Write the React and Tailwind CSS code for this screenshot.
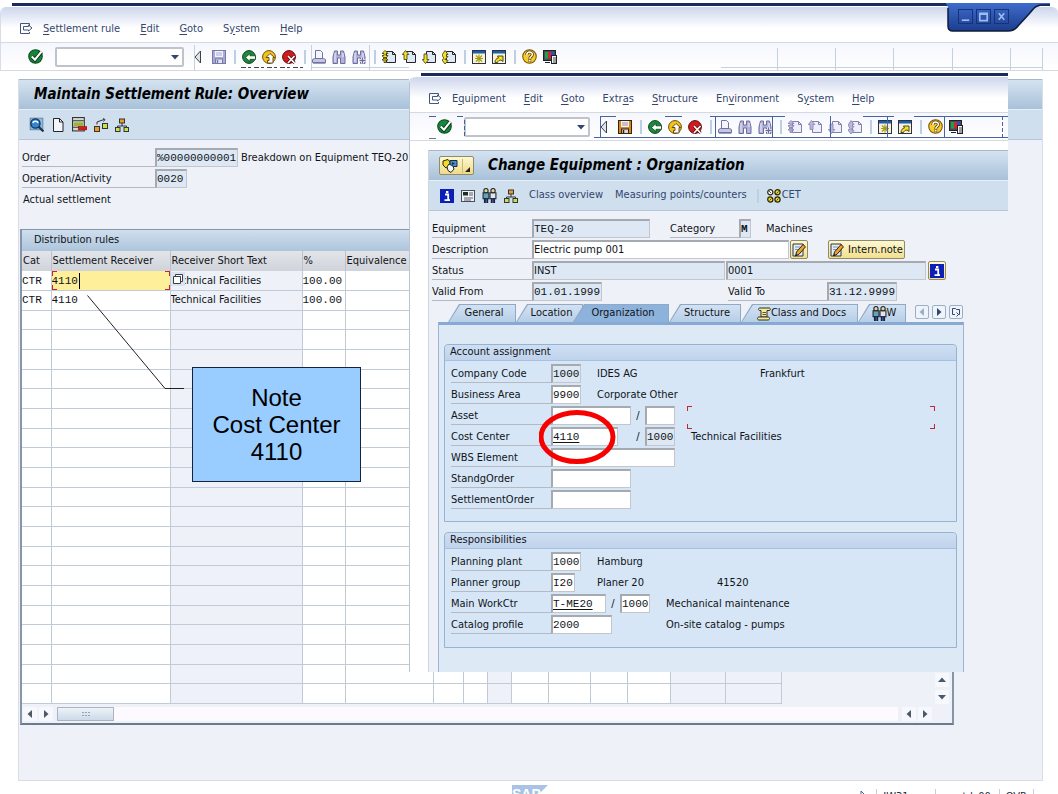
import { clsx } from "clsx";

/* ---------- icons ---------- */

const Icon = ({ size = 14, children }) => (
  <svg width={size} height={size} viewBox="0 0 14 14" aria-hidden="true" focusable="false" className="block shrink-0">
    {children}
  </svg>
);

const MenuIcon = () => (
  <Icon>
    <path d="M10.500 4V1.500H1.500v10h9V10M4.500 4.500h5v-1.500l3.500 3-3.500 3V8h-5z" fill="none" stroke="#44557a" />
  </Icon>
);

const CheckIcon = () => (
  <Icon size={15}>
    <circle cx="7" cy="7" r="6.300" fill="#14883a" stroke="#0b4a1c" />
    <path d="M3.500 7l3 3 6-7.500" fill="none" stroke="#0b3016" strokeWidth="3.600" />
    <path d="M3.500 7l3 3 6-7.500" fill="none" stroke="#fff" strokeWidth="2" />
  </Icon>
);

const TriangleIcon = () => (
  <svg width="8" height="14" viewBox="0 0 8 14" aria-hidden="true" className="block">
    <path d="M6.500 1v12L1 7z" fill="#dfe2e8" stroke="#3c4048" />
  </svg>
);

const SaveIcon = ({ muted }) => (
  <Icon>
    <rect x=".5" y=".5" width="13" height="13" fill={muted ? "#a9a9d8" : "#d58a1c"} stroke={muted ? "#7a7aa8" : "#3a2408"} />
    <rect x="3" y="1" width="8" height="6" fill="#f4f4fc" />
    <path d="M4 3h6M4 5h6" stroke={muted ? "#a9a9d8" : "#a08aa8"} />
    <rect x="3.500" y="9" width="7" height="4.500" fill={muted ? "#e4e4f4" : "#d8d8e6"} stroke={muted ? "#7a7aa8" : "#3a2408"} />
    <path d="M5.500 10v3" stroke={muted ? "#7a7aa8" : "#3a2408"} strokeWidth="1.500" />
  </Icon>
);

const BackIcon = () => (
  <Icon>
    <circle cx="7" cy="7" r="6.400" fill="#1c8a3c" stroke="#0d3f1b" />
    <path d="M3.500 7.500l4.500-4v2.300H13.500v3.500H8v2.300z" fill="#fff" stroke="#0d3f1b" strokeWidth=".8" />
  </Icon>
);

const ExitIcon = () => (
  <Icon>
    <circle cx="7" cy="7" r="6.400" fill="#f2c31a" stroke="#6e4c08" />
    <path d="M8 3.500l4.500 4H11V13H5.500V10.500H7v-3H4z" fill="#fff" stroke="#5a3c05" strokeWidth=".9" />
  </Icon>
);

const CancelIcon = () => (
  <Icon>
    <circle cx="7" cy="7" r="6.400" fill="#cf1a20" stroke="#5e0a0c" />
    <path d="M6 6l6.500 7M12.500 6L6 13" stroke="#5e0a0c" strokeWidth="3.200" />
    <path d="M6 6l6.500 7M12.500 6L6 13" stroke="#fff" strokeWidth="1.700" />
  </Icon>
);

const PrintIcon = () => (
  <Icon>
    <path d="M3.500 8.500V.5h5l2 2v6" fill="#f4f4fd" stroke="#7272a2" />
    <path d="M.5 12.500V9.500l2-1h9l2 1v3z" fill="#c4c4e4" stroke="#7272a2" />
    <path d="M1 13.200h12.500" stroke="#7272a2" />
  </Icon>
);

const FindIcon = ({ plus }) => (
  <Icon>
    <path d="M1 13.500V7l1.500-6h3v4h3V1h3L13 7v6.500H8.500V8h-3v5.500z" fill="#b3b3da" stroke="#6c6ca0" />
    <path d="M3 3v9M11 3v4" stroke="#ededfb" />
    {plus && <path d="M10.500 7.500v6M7.500 10.500h6" stroke="#fff" strokeWidth="3" />}
    {plus && <path d="M10.500 7.500v6M7.500 10.500h6" stroke="#6c6ca0" strokeWidth="1.300" />}
  </Icon>
);

const PAGE_ARROWS = {
  first: "M3 .5l3 3H4v2h2l-3 4-3-4h2v-2H0zM3 7l3 3H4v2.500H2V10H0z",
  prev: "M3.500 .5l3.300 4H5v5H2v-5H.3z",
  next: "M3.500 13.500l3.300-4H5V4H2v5.500H.3z",
  last: "M3 .5l3 4H4.500v2H6l-3 3 3 1-3 3.500L0 10l2-1.500L0 5z",
};

const PageIcon = ({ kind, muted }) => (
  <Icon>
    <path d="M4.500 1.500h6l3 3v8h-9z" fill={muted ? "#eeeefb" : "#dfe9f6"} stroke={muted ? "#8080ad" : "#23252b"} />
    <path d="M10.500 1.500v3h3" fill="none" stroke={muted ? "#8080ad" : "#23252b"} />
    <path d={PAGE_ARROWS[kind]} fill={muted ? "#b9b9dd" : "#f1e22a"} stroke={muted ? "#8080ad" : "#3a3405"} strokeWidth=".8" />
  </Icon>
);

const SessionIcon = ({ shortcut }) => (
  <Icon>
    <rect x=".5" y=".5" width="13" height="13" fill="#f6f3d8" stroke="#2e3140" />
    <rect x="1" y="1" width="12" height="2.500" fill="#1b5fae" />
    {shortcut ? (
      <path d="M3 12.500c0-3 1.500-4 3.500-4.500L5.500 6H11v5.500L9 10c-2 .3-3 1-3.500 2.500z" fill="#f5e02a" stroke="#2c2605" strokeWidth=".8" />
    ) : (
      <path d="M7 4.500v8M3 8.500h8M4 5.500l6 6M10 5.500l-6 6" stroke="#a59a10" strokeWidth="1.100" />
    )}
  </Icon>
);

const HelpIcon = () => (
  <Icon size={15}>
    <circle cx="7" cy="7" r="6.300" fill="#f4cf2a" stroke="#7c5306" />
    <path d="M4.500 5.500c0-3.500 5.200-3.500 5.200-.4C9.700 7 7.300 7 7.300 9" fill="none" stroke="#5c3c04" strokeWidth="2.800" />
    <path d="M4.500 5.500c0-3.500 5.200-3.500 5.200-.4C9.700 7 7.300 7 7.300 9" fill="none" stroke="#fff" strokeWidth="1.400" />
    <rect x="6.300" y="10" width="2" height="2" fill="#fff" stroke="#5c3c04" strokeWidth=".5" />
  </Icon>
);

const LayoutIcon = () => (
  <Icon>
    <rect x=".5" y=".5" width="12" height="10" fill="#4a4d55" stroke="#1f2126" />
    <rect x="2" y="2" width="3" height="6.500" fill="#1fa04a" />
    <rect x="5" y="2" width="3" height="6.500" fill="#d3272c" />
    <rect x="8" y="2" width="3" height="6.500" fill="#2a50c4" />
    <rect x="8.500" y="5.500" width="5" height="8" fill="#f2f2f2" stroke="#1f2126" />
    <path d="M10 8h3M10 10h3M10 12h3" stroke="#1f2126" strokeWidth=".8" />
    <path d="M2 12.500h5" stroke="#1f2126" />
  </Icon>
);

const MagnifierIcon = () => (
  <Icon size={15}>
    <rect x="1" y="1" width="12" height="11" fill="#8fb6e0" stroke="#54708e" strokeWidth=".6" />
    <circle cx="6" cy="6" r="4.300" fill="#2f86d6" stroke="#16334f" strokeWidth="1.200" />
    <path d="M3.500 5.500c1-2 4-2 5 0" fill="none" stroke="#fff" strokeWidth="1.400" />
    <path d="M9 9l4.500 4.500" stroke="#16334f" strokeWidth="2" />
  </Icon>
);

const NewPageIcon = () => (
  <Icon>
    <path d="M2.500 .5h6l3.500 3.500v9.500H2.500z" fill="#f2f6fb" stroke="#23252b" />
    <path d="M8.500 .5V4H12" fill="none" stroke="#23252b" />
  </Icon>
);

const DeleteRowIcon = () => (
  <Icon size={15}>
    <rect x=".5" y=".5" width="11" height="12.500" fill="#d4d9c9" stroke="#33353b" />
    <path d="M1 3.500h10M1 9.500h10" stroke="#33353b" />
    <rect x="1.500" y="5" width="9" height="3.500" fill="#9db33c" />
    <rect x="6" y="9" width="8" height="3" fill="#e01818" stroke="#7c0b0b" strokeWidth=".5" />
  </Icon>
);

const MoveIcon = () => (
  <Icon>
    <path d="M3 6.500V4l7-2.500M9 .5l2 1-1.500 2" fill="none" stroke="#33353b" />
    <rect x=".5" y="8.500" width="5" height="5" fill="#ef9c1d" stroke="#33353b" />
    <rect x="8.500" y="5.500" width="5" height="5" fill="#c9e04b" stroke="#33353b" />
  </Icon>
);

const HierarchyIcon = () => (
  <Icon>
    <path d="M7 5v3M2.500 10V8h9v2" fill="none" stroke="#33353b" />
    <rect x="4.500" y="1" width="5" height="4" fill="#ef9c1d" stroke="#33353b" />
    <rect x=".5" y="9.500" width="4.500" height="4" fill="#c9e04b" stroke="#33353b" />
    <rect x="9" y="9.500" width="4.500" height="4" fill="#c9e04b" stroke="#33353b" />
  </Icon>
);

const InfoIcon = () => (
  <Icon>
    <rect width="14" height="14" fill="#0d1fb4" />
    <path d="M5 5.500h3.200V11M4.500 11.200h5.500" fill="none" stroke="#fff" strokeWidth="1.800" />
    <rect x="6" y="2" width="2.400" height="2.200" fill="#fff" />
  </Icon>
);

const DetailIcon = () => (
  <Icon>
    <rect x=".5" y="1.500" width="13" height="11" fill="#eef3f9" stroke="#4a4d55" />
    <path d="M8 4h4M8 6h4M3 9h9M3 11h7" stroke="#4a4d55" strokeWidth=".9" />
    <rect x="2" y="3" width="5" height="3.500" fill="#1f2b22" />
  </Icon>
);

const PartnersIcon = () => (
  <Icon size={15}>
    <path d="M1 4.500h5.500V10H1z" fill="#5fa6b8" stroke="#22242a" />
    <path d="M7.500 4.500H13V10H7.500z" fill="#dfe6ee" stroke="#22242a" />
    <circle cx="3.700" cy="2.500" r="2" fill="#e9d59a" stroke="#22242a" />
    <circle cx="10.300" cy="2.500" r="2" fill="#e9d59a" stroke="#22242a" />
    <path d="M2.700 9.500v4.500M4.900 9.500v4.500M9.100 9.500v4.500M11.300 9.500v4.500" stroke="#16204e" strokeWidth="1.800" />
  </Icon>
);

const CetIcon = () => (
  <Icon>
    <circle cx="3.300" cy="3.300" r="2.600" fill="#fff" stroke="#2c2605" strokeWidth="1.200" />
    <circle cx="10.500" cy="3.300" r="2.600" fill="#e8d82a" stroke="#2c2605" strokeWidth="1.200" />
    <circle cx="3.300" cy="10.500" r="2.600" fill="#e8d82a" stroke="#2c2605" strokeWidth="1.200" />
    <circle cx="10.500" cy="10.500" r="2.600" fill="#e8d82a" stroke="#2c2605" strokeWidth="1.200" />
    <path d="M2 2l2 2M9.500 4.500l2-2M2.500 11.500l2-2M9.500 11.500l2-2" stroke="#2c2605" strokeWidth=".8" />
  </Icon>
);

const PencilIcon = () => (
  <Icon>
    <path d="M1 1h10v12H1z" fill="#e3edf7" stroke="#33353b" />
    <path d="M3 4h5M3 6.500h4" stroke="#7f93ad" />
    <path d="M3.500 13l1-4L11 1.500l2.500 2.300L7 11.300z" fill="#efa32a" stroke="#2a2015" />
    <path d="M3.500 13l2-.8-1-1.500z" fill="#2a2015" />
  </Icon>
);

const ScrollDocIcon = () => (
  <Icon>
    <path d="M3 1h9.500c1 0 1 2.500 0 2.500H10V10H4V3.500H3C1 3.500 1 1 3 1z" fill="#f4eaa0" stroke="#33301a" />
    <path d="M2 10h9c2 0 2 3 0 3H2c-2 0-2-3 0-3z" fill="#f4eaa0" stroke="#33301a" />
    <path d="M5.500 5.500H9M5.500 7.500H9" stroke="#33301a" strokeWidth=".8" />
  </Icon>
);

const ServicesIcon = () => (
  <svg width="16" height="14" viewBox="0 0 16 14" aria-hidden="true" className="block">
    <path d="M1 2l5-1.500L8 3v4L4 9 1 6z" fill="#f1dc28" stroke="#2c2605" />
    <path d="M8 1.500h7v6H8z" fill="#4a8fc9" stroke="#152c44" />
    <path d="M10 3l3 1.500L10 6z" fill="#102a70" />
    <path d="M5 8l2-3 4 2 1 3-3 3.500-3-2z" fill="#f4f6fa" stroke="#22242a" />
  </svg>
);

const Arrow = ({ dir }) => {
  const d = {
    left: "M7 1v8L2.500 5z",
    right: "M3 1v8l4.500-4z",
    up: "M1 7h8L5 2.500z",
    down: "M1 3h8L5 7.500z",
  }[dir];
  return (
    <svg width="10" height="10" viewBox="0 0 10 10" aria-hidden="true" className="block">
      <path d={d} fill="currentColor" />
    </svg>
  );
};

/* ---------- shared window parts ---------- */

// "_" marks the letter that carries the access-key underline
const AccessLabel = ({ text }) => {
  const [before, after] = text.split("_");
  return (
    <>
      {before}
      <span className="underline underline-offset-2">{after[0]}</span>
      {after.slice(1)}
    </>
  );
};

const MenuBar = ({ items, label, gap }) => (
  <nav
    aria-label={label}
    className="flex h-[35px] items-center bg-linear-to-b from-[#cdd6ec] via-white via-60% to-white pt-2 pl-[18px] whitespace-nowrap text-[#33466e]"
  >
    <span className="mr-2.5">
      <MenuIcon />
    </span>
    <div className={clsx("flex", gap)}>
      {items.map(item => (
        <button key={item} type="button" className="leading-4">
          <AccessLabel text={item} />
        </button>
      ))}
    </div>
  </nav>
);

const Divider = () => <span aria-hidden="true" className="h-[14px] w-1 border-r-2 border-[#bccfe3]" />;

const Tool = ({ label, children }) => (
  <button type="button" aria-label={label} className="shrink-0">
    {children}
  </button>
);

const StandardToolbar = ({ commandWidth, saveMuted, pagingMuted }) => (
  <div className="flex h-[29px] items-center border-y border-[#d5d9e1] bg-linear-to-b from-[#f6f7fd] to-white pl-[27px]">
    <Tool label="Enter">
      <CheckIcon />
    </Tool>
    <div className={clsx("relative mr-2.5 ml-3", commandWidth)}>
      <input
        aria-label="Command"
        className="block h-5 w-full rounded-xs border-2 border-[#bfc3ca] bg-white px-1 outline-none"
      />
      <span className="absolute top-[5px] right-1 text-[#33466e]">
        <Arrow dir="down" />
      </span>
    </div>
    <Tool label="Close command field">
      <TriangleIcon />
    </Tool>
    <div className="ml-2.5 flex items-center gap-1.5">
      <Tool label="Save"><SaveIcon muted={saveMuted} /></Tool>
      <Divider />
      <Tool label="Back"><BackIcon /></Tool>
      <Tool label="Exit"><ExitIcon /></Tool>
      <Tool label="Cancel"><CancelIcon /></Tool>
      <Divider />
      <Tool label="Print"><PrintIcon /></Tool>
      <Tool label="Find"><FindIcon /></Tool>
      <Tool label="Find next"><FindIcon plus /></Tool>
      <Divider />
      <Tool label="First page"><PageIcon kind="first" muted={pagingMuted} /></Tool>
      <Tool label="Previous page"><PageIcon kind="prev" muted={pagingMuted} /></Tool>
      <Tool label="Next page"><PageIcon kind="next" muted={pagingMuted} /></Tool>
      <Tool label="Last page"><PageIcon kind="last" muted={pagingMuted} /></Tool>
      <Divider />
      <Tool label="New session"><SessionIcon /></Tool>
      <Tool label="Create shortcut"><SessionIcon shortcut /></Tool>
      <Divider />
      <Tool label="Help"><HelpIcon /></Tool>
      <Tool label="Customize layout"><LayoutIcon /></Tool>
    </div>
  </div>
);

const titleBar =
  "flex h-[30px] items-center border-t border-[#a9b6c9] bg-linear-to-b from-[#d5e3f0] to-[#a8c1d9]";
const titleText = "text-[15px] font-bold italic text-black whitespace-nowrap";
const appBar = "flex h-[31px] items-center border-t border-b border-t-[#e6eff7] border-b-[#b4c6d8] bg-[#cfdfee]";

const fieldBase =
  "block h-[19px] shrink-0 rounded-none border-t-2 border-r border-b border-l-2 border-t-[#a5a9b0] border-l-[#a5a9b0] border-r-[#c3c6cb] border-b-[#c3c6cb] outline-none";

const Field = ({ id, label, value = "", width, locked, plain, strong, underline }) => (
  <input
    id={id}
    aria-label={label}
    defaultValue={value}
    readOnly={locked}
    className={clsx(
      fieldBase,
      width,
      locked ? "bg-[#dde8f4]" : "bg-white",
      !plain && "font-['Liberation_Mono',monospace]",
      strong && "font-bold",
      underline && "underline underline-offset-2"
    )}
  />
);

const FieldLabel = ({ htmlFor, children, width = "w-[100px]" }) => (
  <label htmlFor={htmlFor} className={clsx("block h-[19px] shrink-0 border-b border-[#b5bac2] leading-5", width)}>
    {children}
  </label>
);

const Row = ({ children }) => <div className="relative flex h-[21px] whitespace-nowrap leading-5">{children}</div>;

const Slash = () => <span className="w-[14px] text-center">/</span>;

const Note = ({ width, children }) => <span className={width}>{children}</span>;

const YellowButton = ({ label, children }) => (
  <button
    type="button"
    aria-label={label}
    className="flex h-[19px] items-center gap-1 rounded-xs border border-[#8f8a6a] bg-linear-to-b from-[#fdf8d2] to-[#f3e08c] px-px"
  >
    {children}
  </button>
);

/* ---------- settlement rule window ---------- */

const COLUMNS = [
  { name: "Cat", width: "w-[29px]" },
  { name: "Settlement Receiver", width: "w-[119px]" },
  { name: "Receiver Short Text", width: "w-[132px]", shaded: true },
  { name: "%", width: "w-[43px]" },
  { name: "Equivalence", width: "w-[88px]" },
  { name: "", width: "w-[30px]" },
  { name: "", width: "w-[24px]" },
  { name: "", width: "w-[24px]", shaded: true },
  { name: "", width: "w-[37px]" },
  { name: "", width: "w-[42px]" },
  { name: "", width: "w-[37px]" },
  { name: "", width: "w-[43px]" },
  { name: "", width: "w-[55px]", shaded: true },
  { name: "", width: "w-[56px]", shaded: true },
];

const RULES = [
  { cat: "CTR", receiver: "4110", text: "Technical Facilities", percent: "100.00" },
  { cat: "CTR", receiver: "4110", text: "Technical Facilities", percent: "100.00" },
];

const EMPTY_ROWS = Array.from({ length: 20 });

const cornerMark = "absolute size-[5px] border-[#c8242c]";

const FocusCorners = () => (
  <>
    <span className={clsx(cornerMark, "top-0 left-0 border-t border-l")} />
    <span className={clsx(cornerMark, "top-0 right-0 border-t border-r")} />
    <span className={clsx(cornerMark, "bottom-0 left-0 border-b border-l")} />
    <span className={clsx(cornerMark, "right-0 bottom-0 border-r border-b")} />
  </>
);

const cell = "overflow-hidden border-r border-b border-[#c0cbd6] p-0 leading-4";
const mono = "font-['Liberation_Mono',monospace]";

const RulesTable = () => (
  <table className="h-[453px] table-fixed border-collapse text-left whitespace-nowrap">
    <thead>
      <tr className="h-5 bg-linear-to-b from-[#e3e5ea] to-[#cfd3da]">
        {COLUMNS.map((col, i) => (
          <th key={i} className={clsx("overflow-hidden border-r border-[#b9c2cd] p-0 pl-px font-normal", col.width)}>
            {col.name}
          </th>
        ))}
      </tr>
    </thead>
    <tbody>
      {RULES.map((rule, i) => (
        <tr key={i} className="h-[19px]">
          <td className={clsx(cell, mono, "bg-white")}>{rule.cat}</td>
          <td className={clsx(cell, mono, "relative", i === 0 ? "bg-[#fef09a]" : "bg-white")}>
            {i === 0 ? (
              <>
                <input
                  aria-label="Settlement Receiver"
                  defaultValue={rule.receiver}
                  className="block h-4 w-[28px] border-r border-black bg-transparent outline-none"
                />
                <span className="pointer-events-none absolute inset-0">
                  <FocusCorners />
                </span>
              </>
            ) : (
              rule.receiver
            )}
          </td>
          <td className={clsx(cell, "relative bg-[#eef1f7]")}>
            {rule.text}
            {i === 0 && (
              <button
                type="button"
                aria-label="Search help"
                className="absolute top-px left-0 flex size-[14px] items-center justify-center bg-[#d9e3f2]"
              >
                <svg width="12" height="12" viewBox="0 0 12 12" aria-hidden="true">
                  <path d="M3.500 3V1.500h7v7H9M1.500 3.500h7v7h-7z" fill="#fff" stroke="#3a3d45" />
                </svg>
              </button>
            )}
          </td>
          <td className={clsx(cell, mono, "bg-white")}>{rule.percent}</td>
          {COLUMNS.slice(4).map((col, j) => (
            <td key={j} className={clsx(cell, col.shaded ? "bg-[#eef1f7]" : "bg-white")} />
          ))}
        </tr>
      ))}
      {EMPTY_ROWS.map((_, i) => (
        <tr key={i} className="h-[19px]">
          {COLUMNS.map((col, j) => (
            <td key={j} className={clsx(cell, col.shaded ? "bg-[#eef1f7]" : "bg-white")} />
          ))}
        </tr>
      ))}
    </tbody>
  </table>
);

const ScrollButton = ({ dir, label }) => (
  <button
    type="button"
    aria-label={label}
    className="flex size-[14px] items-center justify-center bg-[#f7f8fe] text-[#4b5a6b]"
  >
    <Arrow dir={dir} />
  </button>
);

const WindowControls = () => (
  <div className="absolute top-[3px] right-2 h-[29px] w-[104px]">
    <svg width="104" height="29" viewBox="0 0 104 29" aria-hidden="true" className="absolute inset-0">
      <defs>
        <linearGradient id="caption" x1="0" y1="0" x2="0" y2="1">
          <stop offset="0" stopColor="#3f6ccb" />
          <stop offset="1" stopColor="#1b3d8d" />
        </linearGradient>
      </defs>
      <path d="M0 0h104v3h-8c-6 0-8 2-13 8L72 23c-3 4-6 5-10 5H7c-4 0-5-2-5-5V5C2 3 1 2 0 1z" fill="url(#caption)" />
      <path d="M104 2h-8c-6 0-8 3-13 9L72 23c-3 4-6 5-10 5H7c-4 0-5-2-5-5V5" fill="none" stroke="#101c3c" strokeWidth="1.500" />
    </svg>
    <div className="relative flex gap-[3px] pt-1.5 pl-3">
      {[
        ["Minimize", "M3 11h8"],
        ["Maximize", "M3 3.500h8v8H3zM3 4.500h8"],
        ["Close", "M4 3.500l6 7M10 3.500l-6 7"],
      ].map(([label, d]) => (
        <button key={label} type="button" aria-label={label} className="border border-[#16337a]">
          <svg width="13" height="13" viewBox="0 0 14 14" aria-hidden="true" className="block">
            <path d={d} fill="none" stroke="#9dbcf2" strokeWidth="1.800" />
          </svg>
        </button>
      ))}
    </div>
  </div>
);

const SettlementWindow = () => (
  <div className="flex h-full flex-col">
    <div className="mt-[3px] mr-2 ml-3 h-[3px] shrink-0 bg-[#1b2c5c]" />
    <div className="relative mt-px shrink-0 overflow-hidden rounded-t-md border-l border-[#d7deea]">
      <MenuBar
        label="Settlement rule menu"
        gap="gap-5"
        items={["_Settlement rule", "_Edit", "_Goto", "S_ystem", "_Help"]}
      />
      <StandardToolbar commandWidth="w-[129px]" saveMuted />
      {/* faint grid rules over the toolbar */}
      <svg width="1058" height="40" aria-hidden="true" className="pointer-events-none absolute top-[38px] left-0">
        <path d="M193.500 0v26M310.500 0v26M368.500 0v26M776.500 3v22M834.500 3v22M892.500 3v22M951.500 3v22M1009.500 3v22M1041.500 3v22M310 22.500h98M720 22.500h322" stroke="#c3d2df" fill="none" />
        <path d="M240 22.500h63" stroke="#444" strokeDasharray="5 2 3 3" />
      </svg>
    </div>

    <main className="mt-2 mr-[15px] ml-[18px] flex h-[702px] shrink-0 flex-col border border-t-0 border-[#d9dee6] bg-[#eef1f7]">
      <header className={titleBar}>
        <h1 className={clsx(titleText, "pl-[15px]")}>Maintain Settlement Rule: Overview</h1>
      </header>
      <div className={clsx(appBar, "gap-[7px] pl-[10px]")}>
        <Tool label="Details"><MagnifierIcon /></Tool>
        <Tool label="Create"><NewPageIcon /></Tool>
        <Tool label="Delete row"><DeleteRowIcon /></Tool>
        <Tool label="Move"><MoveIcon /></Tool>
        <Tool label="Hierarchy"><HierarchyIcon /></Tool>
      </div>

      <div className="px-[3px] pt-2">
        <Row>
          <FieldLabel htmlFor="order" width="w-[133px]">Order</FieldLabel>
          <Field id="order" value="%00000000001" width="w-[83px]" locked />
          <span className="pl-[3px]">Breakdown on Equipment TEQ-20</span>
        </Row>
        <Row>
          <FieldLabel htmlFor="activity" width="w-[133px]">Operation/Activity</FieldLabel>
          <Field id="activity" value="0020" width="w-[32px]" locked />
        </Row>
        <Row>
          <span className="pl-px">Actual settlement</span>
        </Row>
      </div>

      <section className="mt-[18px] mr-[88px] ml-px border-2 border-t border-[#8696a8] border-b-[#6b7a8c]">
        <h2 className="flex h-[21px] items-center bg-linear-to-b from-[#cfdfee] to-[#adc5dc] pl-3">
          Distribution rules
        </h2>
        <div className="flex justify-between">
          <div className="overflow-hidden">
            <RulesTable />
          </div>
          <div className="flex flex-col justify-end gap-[3px] pr-[3px]">
            <ScrollButton dir="up" label="Scroll up" />
            <ScrollButton dir="down" label="Scroll down" />
          </div>
        </div>
        <div className="flex h-[19px] items-center gap-0.5 pr-5 pl-px">
          <ScrollButton dir="left" label="First column" />
          <ScrollButton dir="right" label="Next column" />
          <div className="mx-0.5 flex h-[14px] flex-1 bg-[#fdfaff]">
            <div className="flex w-[57px] items-center justify-center border border-[#a9b4c4] bg-linear-to-b from-[#eef3f9] to-[#ccdae8] text-[#94a3b4]">
              <svg width="8" height="6" viewBox="0 0 8 6" aria-hidden="true">
                <path d="M0 1.500h2M3 1.500h2M6 1.500h2M0 4.500h2M3 4.500h2M6 4.500h2" stroke="currentColor" />
              </svg>
            </div>
          </div>
          <ScrollButton dir="left" label="Scroll left" />
          <ScrollButton dir="right" label="Scroll right" />
        </div>
      </section>
    </main>

    <footer className="flex shrink-0 items-start pt-1 pl-[512px] leading-4">
      <svg width="36" height="18" viewBox="0 0 36 18" aria-hidden="true">
        <path d="M0 0h36L18 18H0z" fill="#a9c2e6" />
        <text x="0" y="14" fill="#fff" fontSize="14" fontWeight="bold" fontFamily="Liberation Sans, sans-serif">SAP</text>
      </svg>
      <div className="mr-6 ml-auto flex items-center gap-2 pt-1 text-[#1f2a3c]">
        <svg width="8" height="12" viewBox="0 0 8 12" aria-hidden="true">
          <path d="M1 0v11l6-5z" fill="#fff" stroke="#44628f" />
        </svg>
        <span className="border-l border-[#c9ced6] pl-1.5">IW31</span>
        <span className="text-[#33466e]"><Arrow dir="down" /></span>
        <span className="border-l border-[#c9ced6] pl-1.5">smetdc00</span>
        <span className="border-x border-[#c9ced6] px-1.5">OVR</span>
      </div>
    </footer>

    <WindowControls />
  </div>
);

/* ---------- equipment window ---------- */

const TABS = [
  { name: "General", width: "w-[68px]" },
  { name: "Location", width: "w-[67px]" },
  { name: "Organization", width: "w-[96px] -ml-2.5", active: true },
  { name: "Structure", width: "w-[72px]" },
  { name: "Class and Docs", width: "w-[117px]", icon: <ScrollDocIcon /> },
  { name: "W", width: "w-[48px]", icon: <PartnersIcon /> },
];

const tabShape = "[clip-path:polygon(11px_0,100%_0,100%_100%,0_100%)]";

const Tab = ({ tab }) => (
  <button
    type="button"
    role="tab"
    aria-selected={Boolean(tab.active)}
    className={clsx("h-[18px] bg-[#8fa9c6] px-px pt-px", tabShape, tab.width)}
  >
    <span
      className={clsx(
        "flex h-full items-center justify-center pl-1",
        tabShape,
        tab.active ? "bg-[#8db2dc]" : "bg-linear-to-b from-[#d3e2f2] to-[#b6cee8]"
      )}
    >
      {tab.icon}
      {tab.name}
    </span>
  </button>
);

const TabNav = ({ label, muted, children }) => (
  <button
    type="button"
    aria-label={label}
    className={clsx(
      "flex size-[14px] items-center justify-center rounded-xs border border-[#9bb0c8] bg-[#eef4fa]",
      muted ? "text-[#9bb0c8]" : "text-[#33466e]"
    )}
  >
    {children}
  </button>
);

const Group = ({ title, foot, children }) => (
  <section className="rounded-t-sm border border-[#96b3d4] bg-[#d6e6f6]">
    <h2 className="flex h-4 items-center rounded-t-sm border-b border-[#a6c1e0] bg-linear-to-b from-[#cfdff2] to-[#bfd3ec] pl-[5px]">
      {title}
    </h2>
    <div className={clsx("pt-[3px] pl-1.5", foot)}>{children}</div>
  </section>
);

const EquipmentHeader = () => (
  <div className="pt-2 pl-[3px]">
    <Row>
      <FieldLabel htmlFor="equipment">Equipment</FieldLabel>
      <Field id="equipment" value="TEQ-20" width="w-[118px]" locked />
      <span className="w-5" />
      <FieldLabel htmlFor="category" width="w-[69px]">Category</FieldLabel>
      <Field id="category" value="M" width="w-[12px]" locked strong />
      <span className="pl-[15px]">Machines</span>
    </Row>
    <Row>
      <FieldLabel htmlFor="description">Description</FieldLabel>
      <Field id="description" value="Electric pump 001" width="w-[257px] mr-px" plain />
      <YellowButton label="Long text"><PencilIcon /></YellowButton>
      <span className="w-5" />
      <YellowButton>
        <PencilIcon />
        Intern.note
      </YellowButton>
    </Row>
    <Row>
      <FieldLabel htmlFor="status">Status</FieldLabel>
      <Field id="status" value="INST" width="w-[193px] mr-px" locked plain />
      <Field label="User status" value="0001" width="w-[200px] mr-0.5" locked plain />
      <YellowButton label="Status details"><InfoIcon /></YellowButton>
    </Row>
    <Row>
      <FieldLabel htmlFor="valid-from">Valid From</FieldLabel>
      <Field id="valid-from" value="01.01.1999" width="w-[70px]" locked />
      <span className="w-[126px]" />
      <FieldLabel htmlFor="valid-to" width="w-[99px]">Valid To</FieldLabel>
      <Field id="valid-to" value="31.12.9999" width="w-[70px]" locked />
    </Row>
  </div>
);

const AccountAssignment = () => (
  <Group title="Account assignment" foot="pb-2.5">
    <Row>
      <FieldLabel htmlFor="company">Company Code</FieldLabel>
      <Field id="company" value="1000" width="w-[30px]" locked />
      <Note width="w-[163px] ml-4">IDES AG</Note>
      <Note>Frankfurt</Note>
    </Row>
    <Row>
      <FieldLabel htmlFor="area">Business Area</FieldLabel>
      <Field id="area" value="9900" width="w-[30px]" />
      <Note width="ml-4">Corporate Other</Note>
    </Row>
    <Row>
      <FieldLabel htmlFor="asset">Asset</FieldLabel>
      <Field id="asset" width="w-[80px]" />
      <Slash />
      <Field label="Asset sub-number" width="w-[30px]" />
      <span className="relative ml-3 h-[23px] w-[248px]">
        <FocusCorners />
      </span>
    </Row>
    <Row>
      <FieldLabel htmlFor="cost-center">Cost Center</FieldLabel>
      <Field id="cost-center" value="4110" width="w-[67px] mr-[13px]" underline />
      <Slash />
      <Field label="Controlling area" value="1000" width="w-[30px]" locked />
      <Note width="ml-4">Technical Facilities</Note>
      {/* red ring round the cost center */}
      <svg
        width="78"
        height="56"
        viewBox="0 0 78 56"
        aria-hidden="true"
        className="pointer-events-none absolute -top-[18px] left-[88px] z-10"
      >
        <ellipse cx="38" cy="28" rx="36" ry="24.500" fill="none" stroke="#f60000" strokeWidth="5" />
      </svg>
    </Row>
    <Row>
      <FieldLabel htmlFor="wbs">WBS Element</FieldLabel>
      <Field id="wbs" width="w-[124px]" />
    </Row>
    <Row>
      <FieldLabel htmlFor="standing">StandgOrder</FieldLabel>
      <Field id="standing" width="w-[80px]" />
    </Row>
    <Row>
      <FieldLabel htmlFor="settlement">SettlementOrder</FieldLabel>
      <Field id="settlement" width="w-[80px]" />
    </Row>
  </Group>
);

const Responsibilities = () => (
  <Group title="Responsibilities" foot="pb-[11px]">
    <Row>
      <FieldLabel htmlFor="plant">Planning plant</FieldLabel>
      <Field id="plant" value="1000" width="w-[30px]" />
      <Note width="ml-4">Hamburg</Note>
    </Row>
    <Row>
      <FieldLabel htmlFor="planner">Planner group</FieldLabel>
      <Field id="planner" value="I20" width="w-[24px]" />
      <Note width="w-[120px] ml-[22px]">Planer 20</Note>
      <Note>41520</Note>
    </Row>
    <Row>
      <FieldLabel htmlFor="work-center">Main WorkCtr</FieldLabel>
      <Field id="work-center" value="T-ME20" width="w-[55px]" underline />
      <Slash />
      <Field label="Work center plant" value="1000" width="w-[30px]" />
      <Note width="ml-4">Mechanical maintenance</Note>
    </Row>
    <Row>
      <FieldLabel htmlFor="catalog">Catalog profile</FieldLabel>
      <Field id="catalog" value="2000" width="w-[61px]" />
      <Note width="ml-[54px]">On-site catalog - pumps</Note>
    </Row>
  </Group>
);

const EquipmentWindow = () => (
  <div className="absolute top-[72px] right-[50px] left-[409px] bg-white">
    <div className="mt-px ml-3 h-[3px] bg-[#1b2c5c]" />
    <div className="mt-px rounded-tl-md border-l border-[#b9c5d3]">
      <div className="relative overflow-hidden rounded-tl-md">
        <MenuBar
          label="Equipment menu"
          gap="gap-[18px]"
          items={[
            "E_quipment",
            "_Edit",
            "_Goto",
            "Extr_as",
            "_Structure",
            "En_vironment",
            "S_ystem",
            "_Help",
          ]}
        />
        <StandardToolbar commandWidth="w-[126px]" pagingMuted />
        <svg width="600" height="30" aria-hidden="true" className="pointer-events-none absolute top-[35px] left-0">
          <path
            d="M19 4.500h7M47 4.500h6M191 4.500h15M255 4.500h17M300 4.500h75M453 4.500h31M504 4.500h94M184 25.500h414M190.500 4v21M305.500 4v21M362.500 4v21M420.500 4v21M477.500 4v21M534.500 4v21"
            stroke="#4564a0"
            fill="none"
          />
          <path d="M592.500 4v21M54.500 8v16" stroke="#4564a0" strokeDasharray="4 2" />
          <path d="M19 26.500h7" stroke="#777" />
        </svg>
      </div>

      <div className="mt-[9px] ml-[18px] border-l border-[#cfd6df] bg-[#eef1f7]">
        <header className={titleBar}>
          <button
            type="button"
            aria-label="Services for object"
            className="mr-[14px] ml-[10px] flex h-[19px] w-[35px] items-center justify-between rounded-xs border border-[#8f8a6a] bg-linear-to-b from-[#fdf8d2] to-[#f0da84] px-0.5"
          >
            <ServicesIcon />
            <svg width="9" height="14" viewBox="0 0 9 14" aria-hidden="true">
              <path d="M.5 0v14" stroke="#c7b97a" />
              <path d="M8 8v5H3z" fill="#222" />
            </svg>
          </button>
          <h1 className={titleText}>Change Equipment : Organization</h1>
        </header>
        <div className={clsx(appBar, "pl-[11px] whitespace-nowrap text-[#33466e]")}>
          <div className="flex items-center gap-[7px] pr-[11px]">
            <Tool label="Information"><InfoIcon /></Tool>
            <Tool label="Detail"><DetailIcon /></Tool>
            <Tool label="Partners"><PartnersIcon /></Tool>
            <Tool label="Structure list"><HierarchyIcon /></Tool>
          </div>
          <button type="button" className="mr-3">Class overview</button>
          <button type="button" className="mr-2">Measuring points/counters</button>
          <Divider />
          <button type="button" className="ml-2 flex items-center gap-px">
            <CetIcon />
            CET
          </button>
        </div>

        <EquipmentHeader />

        <div className="mr-[44px] ml-[9px]">
          <div className="mt-px flex items-start">
            <div role="tablist" aria-label="Equipment data" className="flex pl-2.5">
              {TABS.map(tab => (
                <Tab key={tab.name} tab={tab} />
              ))}
            </div>
            <div className="ml-auto flex gap-[3px] pt-px pr-px">
              <TabNav label="Previous tab" muted><Arrow dir="left" /></TabNav>
              <TabNav label="Next tab"><Arrow dir="right" /></TabNav>
              <TabNav label="Tab list">
                <svg width="10" height="10" viewBox="0 0 10 10" aria-hidden="true">
                  <path d="M4 7.500H1.500v-6h3l1 1h3v5H7M5.500 5.500l2 2-2 2" fill="none" stroke="currentColor" />
                </svg>
              </TabNav>
            </div>
          </div>
          <div className="flex flex-col gap-2.5 border-x border-t-[3px] border-x-[#9bb5d2] border-t-[#86aad4] bg-[#dde9f5] pt-[19px] pr-1.5 pb-6 pl-[5px]">
            <AccountAssignment />
            <Responsibilities />
          </div>
        </div>
      </div>
    </div>
  </div>
);

/* ---------- annotation ---------- */

const Callout = () => (
  <aside className="absolute top-[367px] left-[192px] w-[169px] border border-[#15233c] bg-[#99ccff] py-4 text-center font-['Liberation_Sans',sans-serif] text-2xl leading-[27px] text-black">
    <p>Note</p>
    <p>Cost Center</p>
    <p>4110</p>
    <svg width="98" height="95" viewBox="0 0 98 95" aria-hidden="true" className="absolute -top-[73px] -left-[106px]">
      <path d="M.5 .5L78 93.500h19" fill="none" stroke="#222" />
    </svg>
  </aside>
);

const App = () => (
  <div className="relative h-screen overflow-hidden bg-white font-['DejaVu_Sans_Condensed','DejaVu_Sans',sans-serif] text-[11px] text-[#101418]">
    <SettlementWindow />
    <EquipmentWindow />
    <Callout />
  </div>
);

export default App;
